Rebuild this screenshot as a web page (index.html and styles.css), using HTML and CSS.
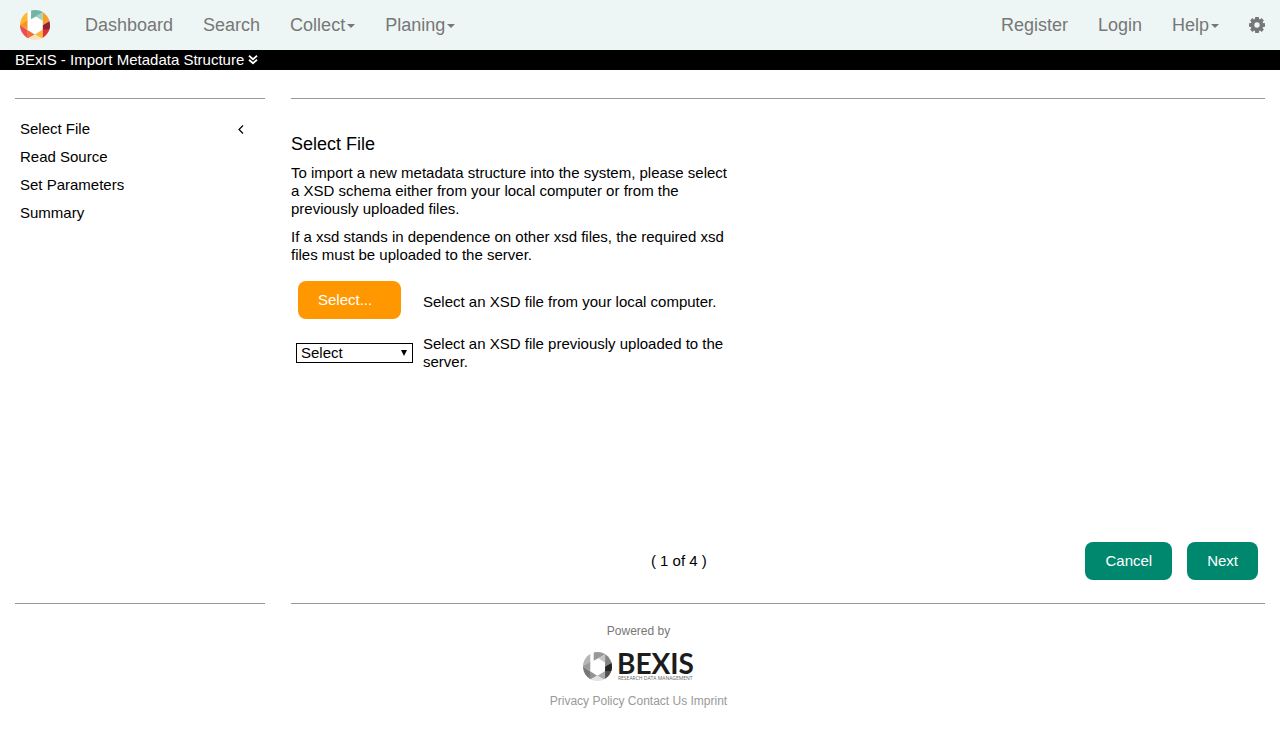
FILE: index.html
```html
<!DOCTYPE html>
<html lang="en">
<head>
<meta charset="utf-8">
<meta name="viewport" content="width=device-width, initial-scale=1">
<title>BExIS - Import Metadata Structure</title>
<link rel="stylesheet" href="styles.css">
</head>
<body>
<header class="navbar">
  <a class="brand" href="#" aria-label="Home">
    <svg class="brand-logo" viewBox="0 0 92 92" aria-hidden="true">
      <defs><clipPath id="disc"><circle cx="46" cy="46" r="46"/></clipPath></defs>
      <g clip-path="url(#disc)">
        <path fill="#fff" d="M22 0H46L70 30V60L46 74L22 62Z"/>
        <path fill="#fbb836" d="M0 0H23V34L0 48Z"/>
        <path fill="#f7941e" d="M0 46L23 32V60Z"/>
        <path fill="#e94f4f" d="M0 46L23 61V92H0Z"/>
        <path fill="#f26b3a" d="M23 61L46 76L20 90Z"/>
        <path fill="#fde0bd" d="M46 74L78 92H14Z"/>
        <path fill="#fbb836" d="M70 60V88L46 75Z"/>
        <path fill="#e62e31" d="M70 59L92 46V92H70Z"/>
        <path fill="#8e2238" d="M92 32V60H70V46Z"/>
        <path fill="#f99d27" d="M70 0H92V34L70 46Z"/>
        <path fill="#72b5a4" d="M34 0H70V8L34 28Z"/>
        <path fill="#9dd3bd" d="M70 8V33L48 20Z"/>
      </g>
    </svg>
  </a>
  <nav class="menu" aria-label="Main">
    <a href="#">Dashboard</a>
    <a href="#">Search</a>
    <a href="#">Collect<span class="caret"></span></a>
    <a href="#">Planing<span class="caret"></span></a>
  </nav>
  <nav class="menu menu-right" aria-label="Account">
    <a href="#">Register</a>
    <a href="#">Login</a>
    <a href="#">Help<span class="caret"></span></a>
    <a href="#" aria-label="Settings">
      <svg class="gear" viewBox="0 0 16 16" aria-hidden="true"><path fill="currentColor" fill-rule="evenodd" d="M6.200 0H9.800L10.100 2L11 2.400L12.600 1.100L14.900 3.400L13.600 5L14 5.900L16 6.200V9.800L14 10.100L13.600 11L14.900 12.600L12.600 14.900L11 13.600L10.100 14L9.800 16H6.200L5.900 14L5 13.600L3.400 14.900L1.100 12.600L2.400 11L2 10.100L0 9.800V6.200L2 5.900L2.400 5L1.100 3.400L3.400 1.100L5 2.400L5.900 2ZM8 5.300A2.700 2.700 0 1 0 8 10.700A2.700 2.700 0 1 0 8 5.300Z"/></svg>
    </a>
  </nav>
</header>
<div class="titlebar">
  <span>BExIS - Import Metadata Structure</span>
  <svg class="chevrons" viewBox="0 0 10 10" aria-hidden="true"><path fill="none" stroke="currentColor" stroke-width="1.800" d="M1 .8L5 4.300L9 .8M1 4.800L5 8.300L9 4.800"/></svg>
</div>
<div class="layout">
  <aside class="sidebar">
    <ol class="steps">
      <li><a href="#" aria-current="step">Select File</a>
        <svg class="step-mark" viewBox="0 0 6 9" aria-hidden="true"><path fill="none" stroke="currentColor" stroke-width="1.200" d="M5 .5L1 4.500L5 8.500"/></svg></li>
      <li><a href="#">Read Source</a></li>
      <li><a href="#">Set Parameters</a></li>
      <li><a href="#">Summary</a></li>
    </ol>
  </aside>
  <main class="wizard">
    <section class="content">
      <h1>Select File</h1>
      <p>To import a new metadata structure into the system, please select a XSD schema either from your local computer or from the previously uploaded files.</p>
      <p>If a xsd stands in dependence on other xsd files, the required xsd files must be uploaded to the server.</p>
      <div class="options">
        <button class="btn btn-file" type="button" aria-describedby="local-text">Select...</button>
        <span id="local-text">Select an XSD file from your local computer.</span>
        <span class="select-wrap">
          <select id="server-file"><option>Select</option></select>
          <span class="select-arrow"></span>
        </span>
        <label for="server-file">Select an XSD file previously uploaded to the server.</label>
      </div>
    </section>
    <div class="pager">
      <span class="count">( 1 of 4 )</span>
      <button class="btn" type="button">Cancel</button>
      <button class="btn" type="button">Next</button>
    </div>
  </main>
</div>
<footer class="footer">
  <span class="powered">Powered by</span>
  <div class="footer-logo">
    <svg class="footer-mark" viewBox="0 0 92 92" aria-hidden="true">
      <defs><clipPath id="disc-gray"><circle cx="46" cy="46" r="46"/></clipPath></defs>
      <g clip-path="url(#disc-gray)">
        <path fill="#fff" d="M22 0H46L70 30V60L46 74L22 62Z"/>
        <path fill="#b5b5b5" d="M0 0H23V34L0 48Z"/>
        <path fill="#9b9b9b" d="M0 46L23 32V60Z"/>
        <path fill="#777" d="M0 46L23 61V92H0Z"/>
        <path fill="#929292" d="M23 61L46 76L20 90Z"/>
        <path fill="#e3e3e3" d="M46 74L78 92H14Z"/>
        <path fill="#ababab" d="M70 60V88L46 75Z"/>
        <path fill="#505050" d="M70 59L92 46V92H70Z"/>
        <path fill="#242424" d="M92 32V60H70V46Z"/>
        <path fill="#858585" d="M70 0H92V34L70 46Z"/>
        <path fill="#999" d="M34 0H70V8L34 28Z"/>
        <path fill="#c4c4c4" d="M70 8V33L48 20Z"/>
      </g>
    </svg>
    <div class="logo-words">
      <span class="logo-name">BEXIS</span>
      <span class="logo-tag">RESEARCH DATA MANAGEMENT</span>
    </div>
  </div>
  <nav class="footer-links" aria-label="Legal"><a href="#">Privacy Policy</a> <a href="#">Contact Us</a> <a href="#">Imprint</a></nav>
</footer>
</body>
</html>
```
FILE: styles.css
```css
* {
  box-sizing: border-box;
}

body {
  margin: 0;
  background: #fff;
  color: #000;
  font: 15px/18px "Liberation Sans", Arial, sans-serif;
}

a {
  color: inherit;
  text-decoration: none;
}

.navbar {
  display: flex;
  align-items: center;
  height: 50px;
  padding-left: 20px;
  background: #edf6f5;
  color: #777;
}

.brand {
  display: flex;
  margin-right: 20px;
}

.brand-logo {
  width: 30px;
  height: 30px;
}

.menu {
  display: flex;
  font-size: 18px;
  line-height: 20px;
}

.menu a {
  display: flex;
  align-items: center;
  padding: 15px;
}

.menu-right {
  margin-left: auto;
}

.caret {
  margin: 2px 0 0 2px;
  border: 4px solid transparent;
  border-top-color: currentColor;
  border-bottom: 0;
}

.gear {
  width: 16px;
  height: 16px;
}

.titlebar {
  display: flex;
  align-items: center;
  gap: 4px;
  height: 20px;
  padding: 0 15px;
  background: #000;
  color: #fff;
}

.chevrons {
  width: 10px;
  height: 10px;
}

.layout {
  display: grid;
  grid-template-columns: 250px 1fr;
  gap: 26px;
  min-height: 506px;
  margin: 28px 15px 0;
}

.sidebar,
.wizard {
  border-top: 1px solid #999;
  border-bottom: 1px solid #999;
}

.steps {
  margin: 0;
  padding: 16px 21px 0 5px;
  list-style: none;
}

.steps li {
  display: flex;
  align-items: center;
  justify-content: space-between;
  height: 28px;
}

.step-mark {
  width: 6px;
  height: 9px;
}

.wizard {
  display: flex;
  flex-direction: column;
}

.content {
  width: 442px;
  max-width: 100%;
  padding-top: 35px;
}

h1 {
  margin: 0 0 10px;
  font-size: 18px;
  font-weight: 400;
  line-height: 20px;
}

p {
  margin: 0 0 10px;
}

.options {
  display: grid;
  grid-template-columns: 117px 1fr;
  align-items: center;
  gap: 12px 10px;
  margin: 17px 0 0 5px;
}

.btn {
  height: 38px;
  padding: 0 20px;
  border: 0;
  border-radius: 8px;
  background: #00886f;
  color: #fff;
  font: inherit;
}

.btn-file {
  width: 103px;
  margin: 0 0 4px 2px;
  background: #ff9800;
  text-align: left;
}

.select-wrap {
  display: flex;
  position: relative;
}

select {
  appearance: none;
  width: 100%;
  height: 20px;
  padding: 0 4px;
  border: 1px solid #000;
  border-radius: 0;
  background: #fff;
  color: #000;
  font: inherit;
}

.select-arrow {
  position: absolute;
  top: 7px;
  right: 6px;
  border: 3px solid transparent;
  border-top: 6px solid #000;
  border-bottom: 0;
  pointer-events: none;
}

.pager {
  display: flex;
  align-items: center;
  gap: 15px;
  margin-top: auto;
  padding: 0 7px 23px 0;
}

.count {
  width: 43%;
  margin-right: auto;
  text-align: right;
}

.footer {
  display: flex;
  flex-direction: column;
  align-items: center;
  padding: 18px 3px 24px 0;
  color: #777;
  font-size: 12px;
}

.footer-logo {
  display: flex;
  gap: 5px;
  height: 30px;
  margin: 11px 0;
}

.footer-mark {
  width: 29px;
  height: 29px;
  margin-top: 1px;
}

.logo-words {
  display: flex;
  flex-direction: column;
}

.logo-name {
  color: #1c1c1c;
  font: 700 28px/24px Lato, sans-serif;
}

.logo-tag {
  padding-left: 1px;
  color: #666;
  font: 5px/6px "Open Sans", sans-serif;
}

.footer-links {
  color: #999;
}
```
